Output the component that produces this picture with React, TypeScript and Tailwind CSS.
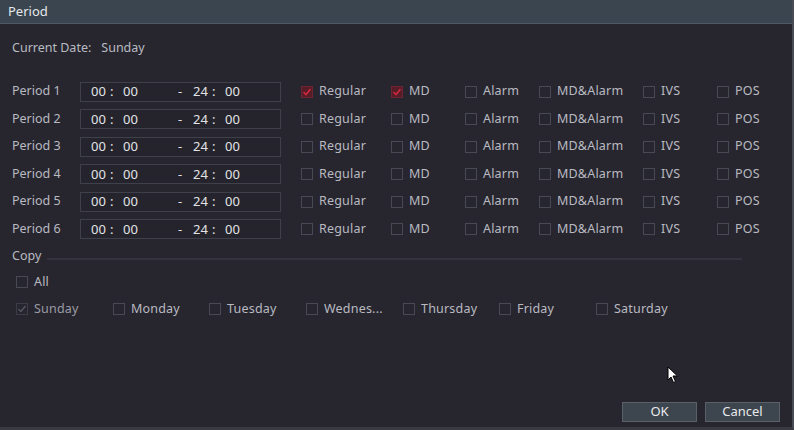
import React from "react";

const font = { fontFamily: '"Noto Sans", "Open Sans", sans-serif' };

function Box({ checked, red, disabled }: { checked?: boolean; red?: boolean; disabled?: boolean }) {
  if (checked && red) {
    return (
      <span className="w-[12px] h-[12px] shrink-0 border border-[#6e2432] bg-[#561c28] flex items-center justify-center">
        <svg width="10" height="10" viewBox="0 0 10 10">
          <path d="M1.5 5.2 L4 7.5 L8.5 2" stroke="#d0283e" strokeWidth="1.6" fill="none" />
        </svg>
      </span>
    );
  }
  if (checked && disabled) {
    return (
      <span className="w-[12px] h-[12px] shrink-0 border border-[#3a3c46] flex items-center justify-center">
        <svg width="10" height="10" viewBox="0 0 10 10">
          <path d="M1.5 5.2 L4 7.5 L8.5 2" stroke="#5a5c66" strokeWidth="1.2" fill="none" />
        </svg>
      </span>
    );
  }
  return <span className="w-[12px] h-[12px] shrink-0 border border-[#474a55]" />;
}

function Check({ label, w, checked, red, disabled }: { label: string; w: string; checked?: boolean; red?: boolean; disabled?: boolean }) {
  return (
    <div className={`flex items-center gap-[6px] ${w}`}>
      <Box checked={checked} red={red} disabled={disabled} />
      <span className={`tracking-[0.2px] ${disabled ? "text-[#9a9ba3]" : "text-[#b9bac0]"}`}>{label}</span>
    </div>
  );
}

function Time({ h, m }: { h: string; m: string }) {
  return (
    <div className="flex items-center">
      <span className="w-[19px]">{h}</span>
      <span className="w-[13px]">:</span>
      <span>{m}</span>
    </div>
  );
}

export default function App() {
  const rows = [1, 2, 3, 4, 5, 6];
  return (
    <div style={font} className="w-[794px] h-[430px] bg-[#27262f] text-[12.5px] text-[#b9bac0] flex flex-col border-r-2 border-b-[3px] border-r-[#4a4c55] border-b-[#3a3a42] overflow-hidden relative">
      <div className="h-[24px] bg-[#3a4550] border-b border-[#4d5964] flex items-center px-[8px] text-[13px] text-[#e6e8ea]">
        Period
      </div>
      <div className="flex flex-col px-[12px]">
        <div className="h-[24px] mt-[12px] flex items-center gap-[10px]">
          <span>Current Date:</span>
          <span>Sunday</span>
        </div>
        <div className="mt-[18px] flex flex-col">
          {rows.map((r) => (
            <div key={r} className="h-[27.5px] flex items-center">
              <span className="w-[68px]">Period {r}</span>
              <div className="w-[201px] h-[20px] border border-[#3e414c] bg-[#25242c] flex items-center pl-[10px] text-[13px] text-[#e2e3e6]">
                <div className="w-[87px]">
                  <Time h="00" m="00" />
                </div>
                <span className="w-[15px]">-</span>
                <Time h="24" m="00" />
              </div>
              <div className="w-[20px]" />
              <Check label="Regular" w="w-[90px]" checked={r === 1} red />
              <Check label="MD" w="w-[74px]" checked={r === 1} red />
              <Check label="Alarm" w="w-[74px]" />
              <Check label="MD&Alarm" w="w-[104px]" />
              <Check label="IVS" w="w-[74px]" />
              <Check label="POS" w="w-[60px]" />
            </div>
          ))}
        </div>
        <div className="mt-[3px] h-[20px] flex items-center gap-[6px]">
          <span>Copy</span>
          <div className="w-[695px] h-[2px] bg-[#32333d] mt-[6px]" />
        </div>
        <div className="mt-[6px] h-[20px] flex items-center pl-[4px]">
          <Check label="All" w="w-[60px]" />
        </div>
        <div className="mt-[7px] h-[20px] flex items-center pl-[4px]">
          <Check label="Sunday" w="w-[97px]" checked disabled />
          <Check label="Monday" w="w-[96px]" />
          <Check label="Tuesday" w="w-[97px]" />
          <Check label="Wednes..." w="w-[97px]" />
          <Check label="Thursday" w="w-[96px]" />
          <Check label="Friday" w="w-[97px]" />
          <Check label="Saturday" w="w-[90px]" />
        </div>
      </div>
      <div className="flex-1" />
      <div className="flex justify-end gap-[8px] pr-[12px] mb-[5px]">
        <button className="w-[75px] h-[20px] bg-[#3d454e] border border-[#596068] text-[13px] text-[#e8e9eb] flex items-center justify-center">OK</button>
        <button className="w-[75px] h-[20px] bg-[#3d454e] border border-[#596068] text-[13px] text-[#e8e9eb] flex items-center justify-center">Cancel</button>
      </div>
      <svg className="absolute left-[667px] top-[366px]" width="12" height="18" viewBox="0 0 12 18">
        <path d="M1 1 L1 14 L4 11 L6.5 16.5 L8.5 15.5 L6 10 L10.5 10 Z" fill="#ffffff" stroke="#000" strokeWidth="1" />
      </svg>
    </div>
  );
}
